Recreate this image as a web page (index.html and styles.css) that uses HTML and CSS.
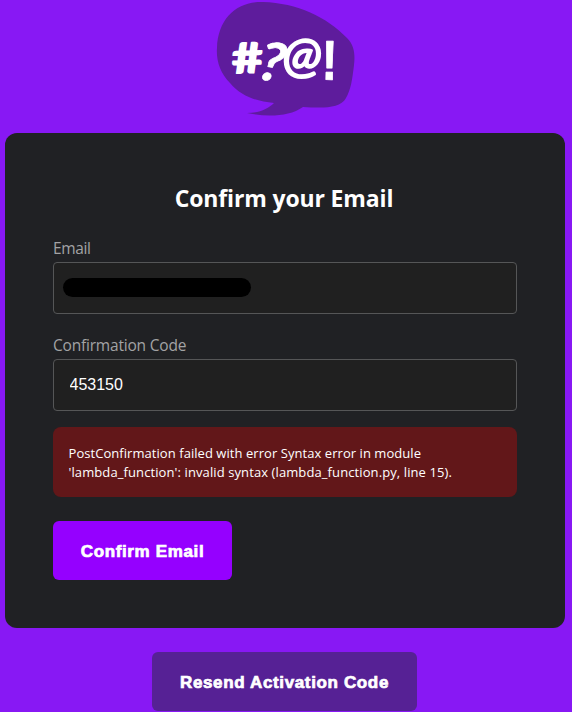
FILE: index.html
```html
<!DOCTYPE html>
<html lang="en">
<head>
<meta charset="utf-8">
<title>Confirm your Email</title>
<link rel="stylesheet" href="styles.css">
</head>
<body>
<main class="page">
  <svg class="logo" width="160" height="124" viewBox="0 0 160 124" role="img" aria-label="#?@!">
    <path class="logo-bubble" d="M11 48C12 18 31 1 57 2C91 3 121 17 141 38C149 46 149 56 148 65C146 81 145 89 140 98C134 109 116 108 97 107C83 117 60 117 41 113C53 113 62 109 68 103C50 101 36 97 24 83C14 73 10 60 11 48Z"/>
    <g class="logo-text">
      <text class="hash" transform="translate(27 73.5) rotate(-2) skewX(4) scale(1.3 1)">#</text>
      <text class="question" transform="translate(48.5 78.5) rotate(8) skewX(-10) scale(1.12 1.08)">?</text>
      <text class="at" transform="translate(76.5 71.5) scale(1.25 1.16)">@</text>
      <text class="bang" transform="translate(115.5 79.5) rotate(1) scale(.95 1.14)">!</text>
    </g>
  </svg>
  <form class="card">
    <h1 class="title">Confirm your Email</h1>
    <div class="field">
      <label class="label label-email">Email</label>
      <div class="input input-hidden"><span class="redacted"></span></div>
    </div>
    <div class="field">
      <label class="label label-code" for="code">Confirmation Code</label>
      <input class="input" id="code" type="text" value="453150">
    </div>
    <p class="error"><span class="line-one">PostConfirmation failed with error Syntax error in module</span><br><span class="line-two">'lambda_function': invalid syntax (lambda_function.py, line 15).</span></p>
    <button class="button primary" type="button">Confirm Email</button>
  </form>
  <button class="button secondary" type="button">Resend Activation Code</button>
</main>
</body>
</html>
```
FILE: styles.css
```css
* { box-sizing: border-box; }
body {
  margin: 0;
  background: #8818f4;
  color: #fff;
  font-family: "Open Sans", "Noto Sans", sans-serif;
}
.page {
  display: flex;
  flex-direction: column;
  align-items: center;
  width: 570px;
  height: 712px;
  overflow: hidden;
}
.logo { display: block; flex: none; margin-left: 2px; margin-bottom: 9px; }
.logo-bubble { fill: #5e1c9c; }
.logo-text {
  fill: #fff;
  stroke: #fff;
  stroke-linejoin: round;
  font-family: Lato, "Open Sans", sans-serif;
  font-weight: 700;
}
.hash { font-size: 42px; stroke-width: 1.4; }
.question { font-size: 49px; stroke-width: .6; }
.at { font-size: 41px; font-style: italic; font-weight: 400; stroke-width: 1.6; }
.bang { font-size: 49px; font-family: "Liberation Sans", sans-serif; stroke-width: .8; }
.card {
  flex: none;
  width: 560px;
  height: 495px;
  padding: 47px 48px 48px;
  border-radius: 12px;
  background: #202124;
}
.title {
  margin: 0 1px 16px -1px;
  font-size: 23px;
  font-weight: 700;
  line-height: 36px;
  letter-spacing: -.15px;
  text-align: center;
}
.field { margin-bottom: 16px; }
.label {
  display: block;
  height: 30px;
  padding-top: 5px;
  font-size: 15.5px;
  line-height: 22px;
  letter-spacing: -.2px;
  color: #a3a3a4;
}
.label-email { letter-spacing: -.4px; }
.field + .field .label { height: 29px; padding-top: 4px; }
.input {
  display: flex;
  align-items: center;
  width: 464px;
  height: 52px;
  padding: 0 15.5px;
  border: 1px solid #555657;
  border-radius: 4px;
  background: #202020;
  color: #fff;
  font: 16px "Liberation Sans", Arial, sans-serif;
}
.input-hidden { padding-left: 9px; padding-bottom: 1px; }
.redacted { width: 188px; height: 19px; border-radius: 10px; background: #000; }
.error {
  height: 70px;
  margin: 0 0 24px;
  padding: 17px 15.5px;
  border-radius: 8px;
  background: #621719;
  font-size: 13px;
  line-height: 19px;
  white-space: nowrap;
}
.line-one { letter-spacing: .055px; }
.line-two { letter-spacing: .1px; }
.button {
  display: block;
  flex: none;
  height: 59px;
  padding: 2px 0 0;
  border: 0;
  border-radius: 6px;
  color: #fff;
  font: 700 17px "Liberation Sans", Arial, sans-serif;
  letter-spacing: .64px;
  white-space: nowrap;
  -webkit-text-stroke: .7px #fff;
}
.primary { width: 179px; background: #9500ff; }
.secondary { width: 265px; margin-top: 24px; margin-right: 1px; background: #562195; }
```
